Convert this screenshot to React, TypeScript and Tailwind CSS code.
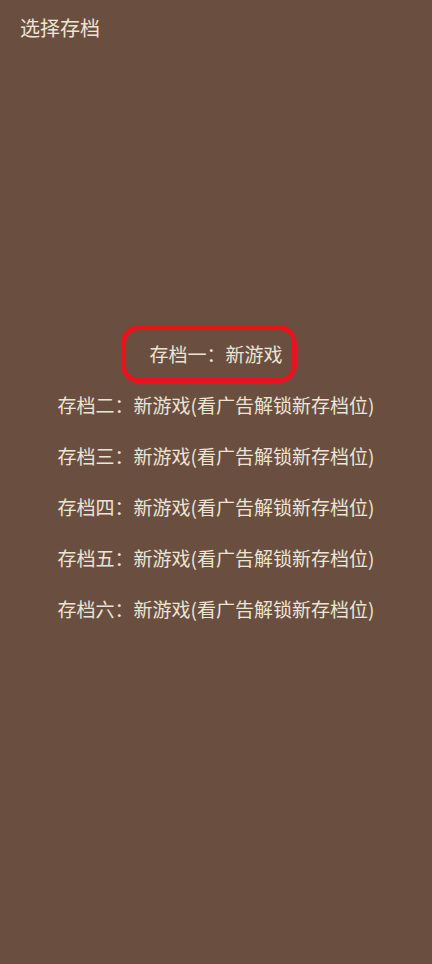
const slots = ["一", "二", "三", "四", "五", "六"];

export default function App() {
  return (
    <div
      className="flex h-[964px] w-full flex-col bg-[#6a4f41] text-[#ece4d4]"
      style={{ fontFamily: '"Noto Sans CJK SC", "Noto Sans", sans-serif' }}
    >
      <div className="flex h-14 items-center px-5 text-[20px]">选择存档</div>

      <div className="flex flex-1 flex-col items-center justify-center pb-14">
        {slots.map((n, i) => (
          <div key={n} className="flex h-[51px] items-center justify-center text-[19px]">
            {i === 0 ? (
              <span className="relative inline-block">
                存档{n}：新游戏
                {/* red highlight ring drawn over the first slot */}
                <span className="pointer-events-none absolute -top-[15px] -bottom-[14px] -left-[28px] -right-[14px] rounded-[18px] border-[5px] border-[#e8131f]" />
              </span>
            ) : (
              <span>存档{n}：新游戏(看广告解锁新存档位)</span>
            )}
          </div>
        ))}
      </div>
    </div>
  );
}
